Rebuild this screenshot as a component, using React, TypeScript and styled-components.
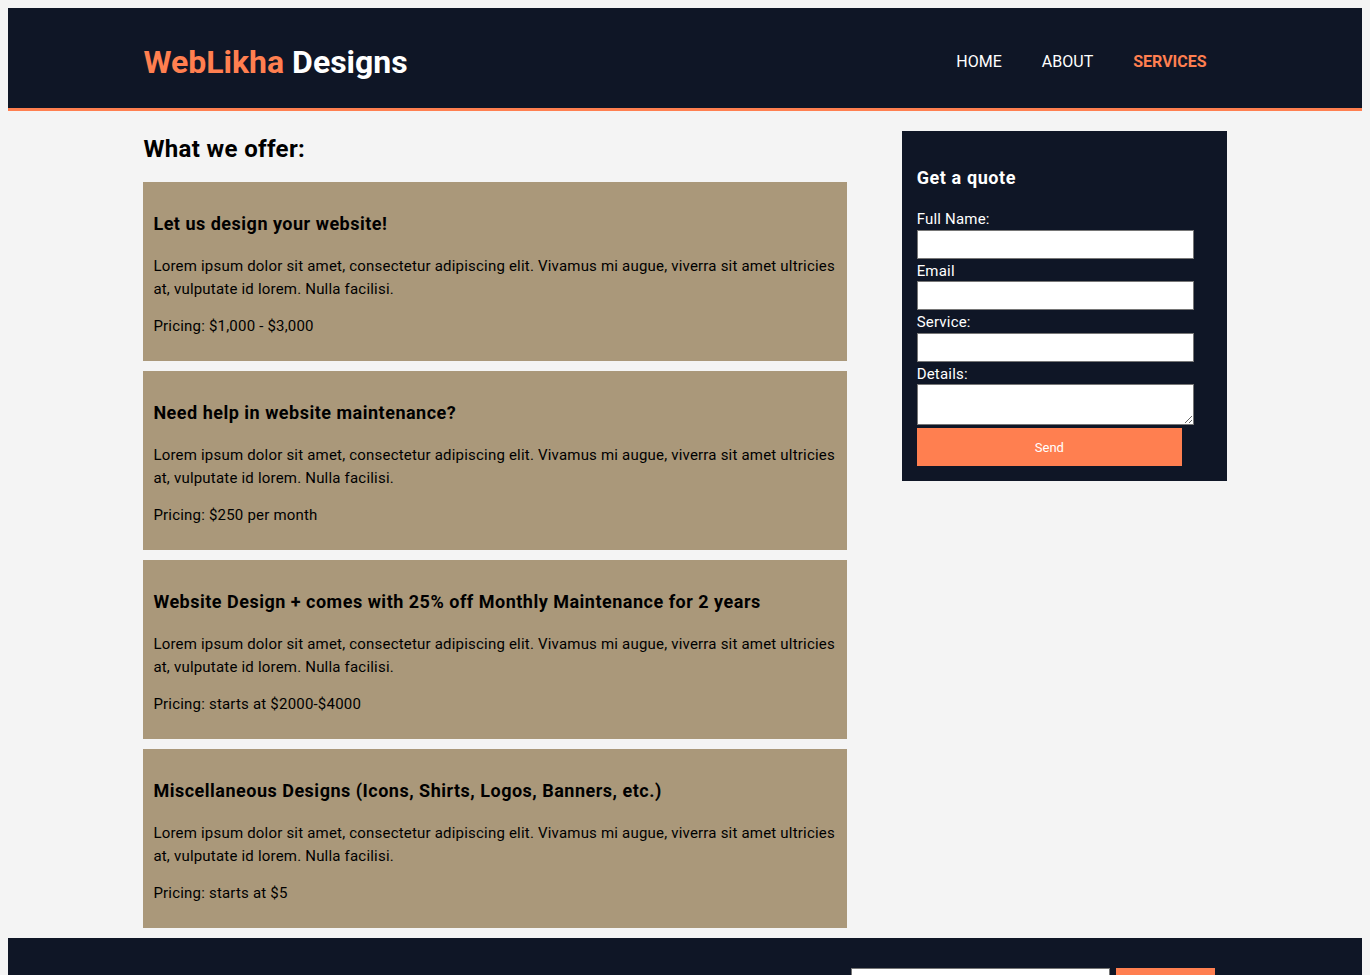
import styled, { createGlobalStyle } from "styled-components";

const GlobalStyle = createGlobalStyle`
  body {
    margin: 8px;
    background-color: #f4f4f4;
    font-family: Roboto, "Noto Sans", sans-serif;
    font-size: 15px;
    line-height: 1.5;
    letter-spacing: 0.2px;
    color: #000;
  }
`;

const Header = styled.header`
  background: #0f1626;
  color: #fff;
  padding-top: 30px;
  min-height: 70px;
  border-bottom: 3px solid #ff7f50;
`;

const Container = styled.div`
  width: 80%;
  margin: 0 auto;
  display: flex;
  justify-content: space-between;
  align-items: flex-start;
`;

const Brand = styled.h1`
  margin: 0;
  font-size: 32px;
  line-height: 48px;
  font-weight: 700;
  letter-spacing: 0;
`;

const Highlight = styled.span`
  color: #ff7f50;
`;

const NavList = styled.ul`
  display: flex;
  list-style: none;
  margin: 12px 0 0;
  padding: 0;
`;

const NavItem = styled.li`
  padding: 0 20px;
`;

const NavLink = styled.a<{ $current?: boolean }>`
  color: ${(p) => (p.$current ? "#ff7f50" : "#fff")};
  font-weight: ${(p) => (p.$current ? 700 : 400)};
  text-decoration: none;
  text-transform: uppercase;
  font-size: 16px;
  letter-spacing: 0;
`;

const Main = styled(Container)`
  margin-top: 20px;
`;

const Article = styled.section`
  width: 65%;
`;

const PageTitle = styled.h1`
  margin: 0 0 15px;
  font-size: 24px;
  line-height: 36px;
  letter-spacing: 0.35px;
`;

const Offer = styled.div`
  background: #aa987a;
  padding: 10px 10px 8.5px;
  margin-bottom: 10px;

  h3 {
    margin: 18px 0;
    font-size: 18px;
    letter-spacing: 0.5px;
  }

  p {
    margin: 15px 0;
  }
`;

const Sidebar = styled.aside`
  width: 30%;
  box-sizing: border-box;
  background: #0f1626;
  color: #fff;
  padding: 15px;

  h3 {
    margin: 18px 0 16px;
    font-size: 18px;
    letter-spacing: 0.6px;
  }
`;

const Label = styled.label`
  display: block;
  padding-top: 2px;
  line-height: 20.5px;
`;

const Field = styled.input`
  display: block;
  width: 90%;
  height: 19px;
  padding: 4px 5px;
  border: 1px solid #767676;
  font-size: 13px;
`;

const Details = styled.textarea`
  width: 90%;
  height: 31px;
  padding: 4px 5px;
  border: 1px solid #767676;
  font-size: 13px;
  vertical-align: bottom;
`;

const SendButton = styled.button`
  display: block;
  width: 90%;
  height: 38px;
  margin-top: 3px;
  border: none;
  background: #ff7f50;
  color: #fff;
  font-family: inherit;
  font-size: 13px;
`;

const Footer = styled.footer`
  background: #0f1626;
  color: #fff;
  padding: 30px 0;
`;

const Newsletter = styled.form`
  display: flex;
  gap: 6px;
  margin-left: auto;
  margin-right: 12px;
`;

const NewsInput = styled.input`
  width: 249px;
  height: 25px;
  padding: 4px;
  border: 1px solid #767676;
`;

const NewsButton = styled.button`
  width: 99px;
  height: 35px;
  border: none;
  background: #ff7f50;
  color: #fff;
  font-family: inherit;
`;

const offers = [
  { title: "Let us design your website!", price: "Pricing: $1,000 - $3,000" },
  { title: "Need help in website maintenance?", price: "Pricing: $250 per month" },
  {
    title: "Website Design + comes with 25% off Monthly Maintenance for 2 years",
    price: "Pricing: starts at $2000-$4000",
  },
  {
    title: "Miscellaneous Designs (Icons, Shirts, Logos, Banners, etc.)",
    price: "Pricing: starts at $5",
  },
];

const lorem =
  "Lorem ipsum dolor sit amet, consectetur adipiscing elit. Vivamus mi augue, viverra sit amet ultricies at, vulputate id lorem. Nulla facilisi.";

export default function App() {
  return (
    <>
      <GlobalStyle />
      <Header>
        <Container>
          <Brand>
            <Highlight>WebLikha</Highlight> Designs
          </Brand>
          <nav>
            <NavList>
              <NavItem>
                <NavLink href="#">Home</NavLink>
              </NavItem>
              <NavItem>
                <NavLink href="#">About</NavLink>
              </NavItem>
              <NavItem>
                <NavLink href="#" $current>
                  Services
                </NavLink>
              </NavItem>
            </NavList>
          </nav>
        </Container>
      </Header>

      <Main>
        <Article>
          <PageTitle>What we offer:</PageTitle>
          {offers.map((o) => (
            <Offer key={o.title}>
              <h3>{o.title}</h3>
              <p>{lorem}</p>
              <p>{o.price}</p>
            </Offer>
          ))}
        </Article>
        <Sidebar>
          <h3>Get a quote</h3>
          <form onSubmit={(e) => e.preventDefault()}>
            <Label>Full Name:</Label>
            <Field type="text" />
            <Label>Email</Label>
            <Field type="email" />
            <Label>Service:</Label>
            <Field type="text" />
            <Label>Details:</Label>
            <Details />
            <SendButton type="submit">Send</SendButton>
          </form>
        </Sidebar>
      </Main>

      <Footer>
        <Container>
          <Newsletter onSubmit={(e) => e.preventDefault()}>
            <NewsInput type="email" placeholder="Enter Email..." />
            <NewsButton type="submit">Subscribe</NewsButton>
          </Newsletter>
        </Container>
      </Footer>
    </>
  );
}
